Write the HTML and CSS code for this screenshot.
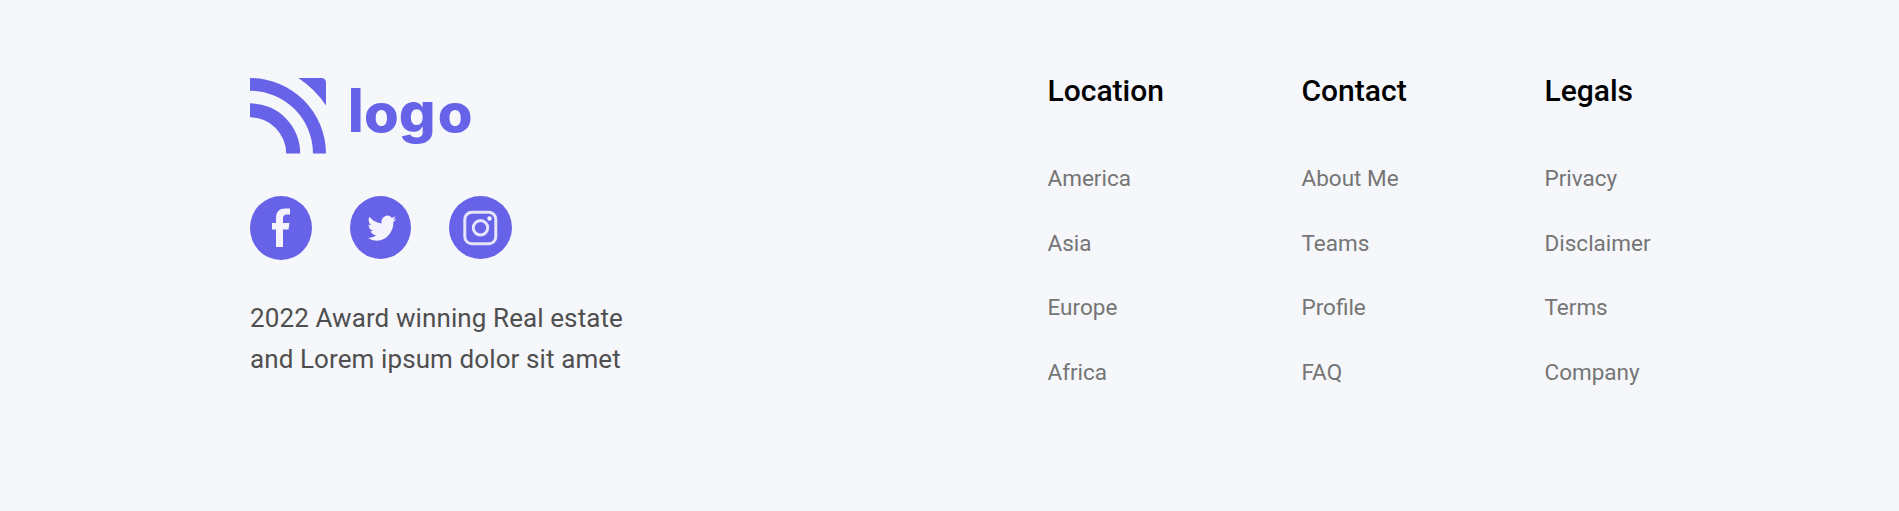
FILE: index.html
```html
<!DOCTYPE html>
<html lang="en">
<head>
<meta charset="utf-8">
<title>Footer</title>
<link rel="stylesheet" href="styles.css">
</head>
<body>
<footer class="footer">
  <section class="brand">
    <svg class="logo" viewBox="0 0 230 76" role="img" aria-label="logo">
      <path d="M0 0A75.8 75.8 0 0 1 76 75.5H63A63 63 0 0 0 0 12.7ZM0 25.3A50.2 50.2 0 0 1 50.2 75.5H36.2A36.2 36.2 0 0 0 0 39.3ZM48.3 0H71Q76 0 76 5V27.5Q65 11 48.3 0Z"/>
      <text class="wordmark" transform="scale(1.06 1)" y="53.7" x="91.6 107.6 140.4 177.2"><tspan class="tall">l</tspan>o<tspan class="deep">g</tspan>o</text>
    </svg>
    <nav class="social">
      <a class="social-link"><svg class="icon facebook" viewBox="0 0 62 64"><ellipse cx="31" cy="32" rx="31" ry="32"/><path class="glyph" d="M26 51V33.5H22V27H26V22Q26 12.5 35 12.5H40V18.5H37Q33 18.5 33 22V27H39.5L38.5 33.5H33V51Z"/></svg></a>
      <a class="social-link"><svg class="icon twitter" viewBox="0 0 61 63"><ellipse cx="30.5" cy="31.5" rx="30.5" ry="31.5"/><path class="glyph" transform="translate(17.5 16.8) scale(1.2 1.28)" d="M23.95 4.57a10 10 0 0 1-2.82.77 4.96 4.96 0 0 0 2.16-2.72c-.95.55-2 .95-3.13 1.18a4.92 4.92 0 0 0-8.38 4.48C7.69 8.09 4.07 6.13 1.64 3.16a4.82 4.82 0 0 0-.67 2.48c0 1.71.87 3.21 2.19 4.1a4.9 4.9 0 0 1-2.23-.62v.06a4.92 4.92 0 0 0 3.95 4.83 5 5 0 0 1-2.21.08 4.94 4.94 0 0 0 4.6 3.42A9.87 9.87 0 0 1 0 19.54a13.99 13.99 0 0 0 7.55 2.21c9.05 0 14-7.5 14-13.98 0-.21 0-.42-.02-.63a9.94 9.94 0 0 0 2.42-2.57Z"/></svg></a>
      <a class="social-link"><svg class="icon instagram" viewBox="0 0 63 63"><circle cx="31.5" cy="31.5" r="31.5"/><rect class="line" x="15.8" y="16.3" width="31" height="31.5" rx="7"/><circle class="line" cx="31.5" cy="31.8" r="7.2"/><circle class="glyph" cx="40.5" cy="22.5" r="2.2"/></svg></a>
    </nav>
    <p class="tagline">2022 Award winning Real estate<br>and Lorem ipsum dolor sit amet</p>
  </section>
  <nav class="columns">
    <div class="column">
      <h2 class="title">Location</h2>
      <ul class="links"><li>America</li><li>Asia</li><li>Europe</li><li>Africa</li></ul>
    </div>
    <div class="column">
      <h2 class="title">Contact</h2>
      <ul class="links"><li>About Me</li><li>Teams</li><li>Profile</li><li>FAQ</li></ul>
    </div>
    <div class="column">
      <h2 class="title">Legals</h2>
      <ul class="links"><li>Privacy</li><li>Disclaimer</li><li>Terms</li><li>Company</li></ul>
    </div>
  </nav>
</footer>
</body>
</html>
```
FILE: styles.css
```css
* { box-sizing: border-box; }
body {
  margin: 0;
  min-height: 511px;
  background: #f5f7fb;
  font-family: Roboto, "Liberation Sans", sans-serif;
}
.footer {
  display: grid;
  grid-template-columns: 797.5px 1fr;
  padding: 72px 0 0 250px;
}
.brand { padding-top: 6px; }
.logo {
  display: block;
  width: 230px;
  height: 76px;
  overflow: visible;
  fill: #6763e8;
}
.wordmark {
  font: 800 53px Inter, sans-serif;
}
.tall { font-size: 61px; font-weight: 700; }
.deep { font-size: 54.5px; }
.social {
  display: grid;
  grid-template-columns: 100px 99px 63px;
  align-items: start;
  margin-top: 42px;
  height: 64px;
}
.icon { display: block; fill: #6763e8; }
.facebook { width: 62px; height: 64px; }
.twitter { width: 61px; height: 63px; }
.instagram { width: 63px; height: 63px; }
.icon .glyph { fill: #f4f3fe; }
.icon .line { fill: none; stroke: #e6e5fb; stroke-width: 3; }
.tagline {
  margin: 38px 0 0;
  color: #4f4f4f;
  font-size: 26px;
  line-height: 41px;
  letter-spacing: 0.1px;
}
.columns {
  display: grid;
  grid-template-columns: 254px 243px 160px;
  align-content: start;
}
.title {
  margin: 0;
  color: #000;
  font-size: 30px;
  font-weight: 500;
  line-height: 38px;
}
.links {
  margin: 36px 0 0;
  padding: 0;
  list-style: none;
  color: #757575;
  font-size: 22.5px;
  line-height: 64.6px;
}
```
